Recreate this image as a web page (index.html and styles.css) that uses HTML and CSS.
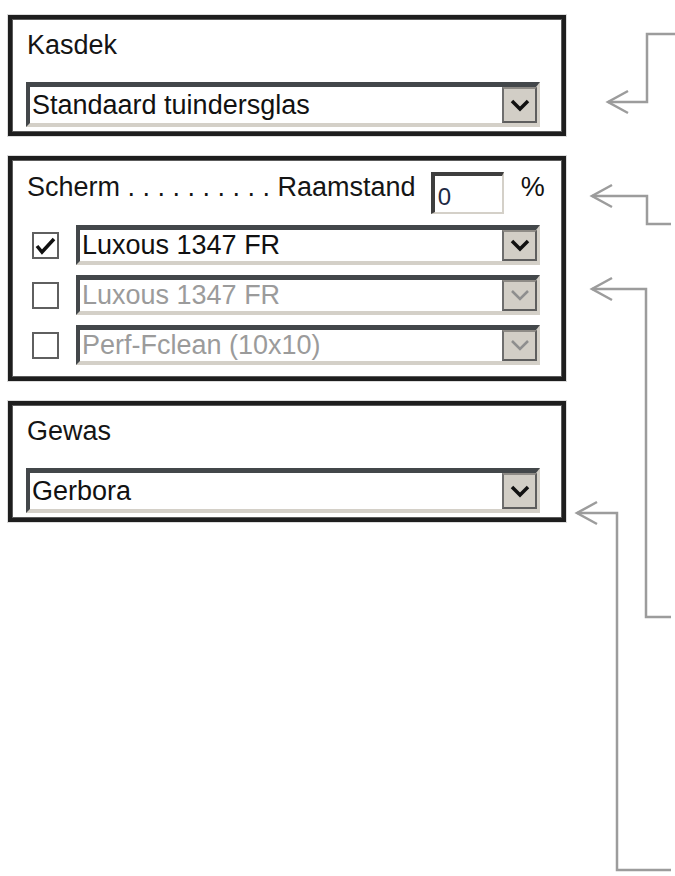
FILE: index.html
```html
<!DOCTYPE html>
<html lang="nl">
<head>
    <meta charset="UTF-8">
    <meta name="viewport" content="width=device-width, initial-scale=1.0">
    <title>Kas instellingen</title>
    <link rel="stylesheet" href="styles.css">
</head>
<body>
    <div class="page">
        <div class="panels">
            <section class="panel panel-single">
                <div class="label">Kasdek</div>
                <div class="select">
                    <span class="value">Standaard tuindersglas</span>
                    <span class="drop">
                        <svg width="20" height="13" viewBox="0 0 20 13"><polyline points="2,2 10,10 18,2" /></svg>
                    </span>
                </div>
            </section>

            <section class="panel panel-scherm">
                <div class="scherm-head">
                    <span class="label">Scherm . . . . . . . . . . Raamstand</span>
                    <span class="num-input">0</span>
                    <span class="pct">%</span>
                </div>
                <div class="scherm-row">
                    <span class="check">
                        <svg width="23" height="23" viewBox="0 0 23 23"><polyline points="3,12 8,18 20,5" /></svg>
                    </span>
                    <div class="select select-small">
                        <span class="value">Luxous 1347 FR</span>
                        <span class="drop">
                            <svg width="20" height="13" viewBox="0 0 20 13"><polyline points="2,2 10,10 18,2" /></svg>
                        </span>
                    </div>
                </div>
                <div class="scherm-row">
                    <span class="check"></span>
                    <div class="select select-small disabled">
                        <span class="value">Luxous 1347 FR</span>
                        <span class="drop">
                            <svg width="20" height="13" viewBox="0 0 20 13"><polyline points="2,2 10,10 18,2" /></svg>
                        </span>
                    </div>
                </div>
                <div class="scherm-row">
                    <span class="check"></span>
                    <div class="select select-small disabled">
                        <span class="value">Perf-Fclean (10x10)</span>
                        <span class="drop">
                            <svg width="20" height="13" viewBox="0 0 20 13"><polyline points="2,2 10,10 18,2" /></svg>
                        </span>
                    </div>
                </div>
            </section>

            <section class="panel panel-single">
                <div class="label">Gewas</div>
                <div class="select">
                    <span class="value">Gerbora</span>
                    <span class="drop">
                        <svg width="20" height="13" viewBox="0 0 20 13"><polyline points="2,2 10,10 18,2" /></svg>
                    </span>
                </div>
            </section>
        </div>

        <!-- connector arrows on the right -->
        <svg class="arrows" width="675" height="876" viewBox="0 0 675 876">
            <path d="M675 34 H647 V102 H608" />
            <path d="M628 91 L608 102 L628 113" />
            <path d="M671 224 H647 V196 H592" />
            <path d="M612 185 L592 196 L612 207" />
            <path d="M671 617 H646 V289 H592" />
            <path d="M612 278 L592 289 L612 300" />
            <path d="M671 870 H617 V513 H577" />
            <path d="M597 502 L577 513 L597 524" />
        </svg>
    </div>
</body>
</html>
```

FILE: styles.css
```css
body {
    margin: 0;
    background: #fff;
    font-family: "Liberation Sans", Arial, sans-serif;
    color: #111;
}

.page {
    position: relative;
    width: 675px;
    height: 876px;
    overflow: hidden;
}

.panels {
    display: flex;
    flex-direction: column;
    gap: 20px;
    width: 558px;
    padding: 15px 0 0 8px;
}

.panel {
    border: 4px solid #1e1e1e;
    box-shadow: 0 0 0 1px #dcdcdc, inset 0 0 0 1px #5c5c5c;
    background: #fff;
}

.panel-single {
    padding: 11px 22px 5px 14px;
}

.panel-scherm {
    padding: 12px 22px 12px 14px;
}

.label {
    font-size: 27px;
    line-height: 31px;
    padding-left: 1px;
    white-space: nowrap;
    color: #151515;
}

.select {
    display: flex;
    align-items: stretch;
    height: 45px;
    margin-top: 21px;
    box-sizing: border-box;
    border-top: 5px solid #43474a;
    border-left: 4px solid #43474a;
    border-bottom: 4px solid #d4d0c8;
    border-right: 4px solid #d4d0c8;
    background: #fff;
}

.select .value {
    flex: 1;
    display: flex;
    align-items: center;
    padding-left: 2px;
    font-size: 27px;
    color: #111;
    white-space: nowrap;
}

.select .drop {
    width: 35px;
    display: flex;
    align-items: center;
    justify-content: center;
    background: #d2cec6;
    border: 2px solid #5e5e5e;
    border-top-color: #8e8b86;
    border-left-color: #6e6e6e;
    box-sizing: border-box;
    margin-right: -1px;
}

.select .drop polyline {
    fill: none;
    stroke: #111;
    stroke-width: 3.5;
}

.select-small {
    height: 40px;
    margin-top: 0;
    flex: 1;
}

.select.disabled .value {
    color: #9b9b9b;
}

.select.disabled .drop polyline {
    stroke: #8e8e8e;
    stroke-width: 2.5;
}

.scherm-head {
    display: flex;
    align-items: flex-start;
    height: 42px;
    margin-bottom: 11px;
}

.scherm-head .label {
    flex-shrink: 0;
}

.num-input {
    flex-shrink: 0;
    width: 73px;
    height: 42px;
    margin-left: 15px;
    box-sizing: border-box;
    border-top: 4px solid #3e3e3e;
    border-left: 4px solid #3e3e3e;
    border-bottom: 2px solid #d4d0c8;
    border-right: 2px solid #d4d0c8;
    padding: 4px 0 0 3px;
    font-size: 24px;
    line-height: 34px;
    color: #1f2a44;
}

.pct {
    flex-shrink: 0;
    margin-left: 17px;
    font-size: 27px;
    line-height: 31px;
}

.scherm-row {
    display: flex;
    align-items: center;
    gap: 17px;
    margin-bottom: 10px;
}

.scherm-row:last-child {
    margin-bottom: 0;
}

.check {
    width: 27px;
    height: 27px;
    margin-left: 6px;
    box-sizing: border-box;
    border: 2px solid #5f5f5f;
    background: #fff;
    display: flex;
    align-items: center;
    justify-content: center;
    flex-shrink: 0;
}

.check polyline {
    fill: none;
    stroke: #111;
    stroke-width: 3.5;
}

.arrows {
    position: absolute;
    top: 0;
    left: 0;
    pointer-events: none;
}

.arrows path {
    fill: none;
    stroke: #9c9c9c;
    stroke-width: 2.5;
}
```
